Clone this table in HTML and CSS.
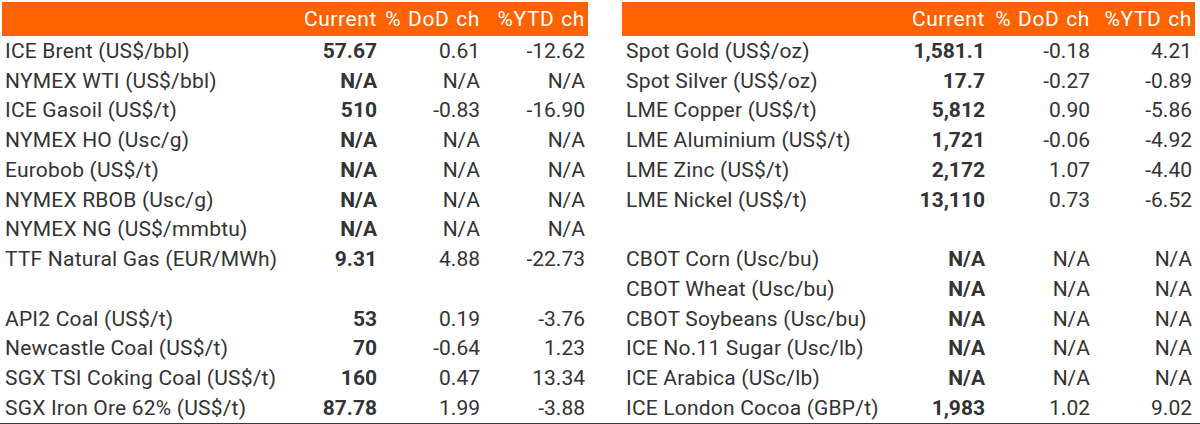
FILE: index.html
```html
<!DOCTYPE html>
<html>
<head>
<meta charset="utf-8">
<link rel="stylesheet" href="styles.css">
</head>
<body>
<div class="wrap">
  <table class="tbl tbl-left">
    <colgroup><col class="c-label-l"><col class="c-cur"><col class="c-dod"><col class="c-ytd"></colgroup>
    <thead><tr><th class="label"></th><th>Current</th><th>% DoD ch</th><th>%YTD ch</th></tr></thead>
    <tbody>
      <tr><td class="label">ICE Brent (US$/bbl)</td><td class="cur">57.67</td><td>0.61</td><td>-12.62</td></tr>
      <tr><td class="label">NYMEX WTI (US$/bbl)</td><td class="cur">N/A</td><td>N/A</td><td>N/A</td></tr>
      <tr><td class="label">ICE Gasoil (US$/t)</td><td class="cur">510</td><td>-0.83</td><td>-16.90</td></tr>
      <tr><td class="label">NYMEX HO (Usc/g)</td><td class="cur">N/A</td><td>N/A</td><td>N/A</td></tr>
      <tr><td class="label">Eurobob (US$/t)</td><td class="cur">N/A</td><td>N/A</td><td>N/A</td></tr>
      <tr><td class="label">NYMEX RBOB (Usc/g)</td><td class="cur">N/A</td><td>N/A</td><td>N/A</td></tr>
      <tr><td class="label">NYMEX NG (US$/mmbtu)</td><td class="cur">N/A</td><td>N/A</td><td>N/A</td></tr>
      <tr><td class="label">TTF Natural Gas (EUR/MWh)</td><td class="cur">9.31</td><td>4.88</td><td>-22.73</td></tr>
      <tr><td class="label"></td><td class="cur"></td><td></td><td></td></tr>
      <tr><td class="label">API2 Coal (US$/t)</td><td class="cur">53</td><td>0.19</td><td>-3.76</td></tr>
      <tr><td class="label">Newcastle Coal (US$/t)</td><td class="cur">70</td><td>-0.64</td><td>1.23</td></tr>
      <tr><td class="label">SGX TSI Coking Coal (US$/t)</td><td class="cur">160</td><td>0.47</td><td>13.34</td></tr>
      <tr><td class="label">SGX Iron Ore 62% (US$/t)</td><td class="cur">87.78</td><td>1.99</td><td>-3.88</td></tr>
    </tbody>
  </table>
  <table class="tbl tbl-right">
    <colgroup><col class="c-label-r"><col class="c-cur"><col class="c-dod-r"><col class="c-ytd-r"></colgroup>
    <thead><tr><th class="label"></th><th>Current</th><th>% DoD ch</th><th>%YTD ch</th></tr></thead>
    <tbody>
      <tr><td class="label">Spot Gold (US$/oz)</td><td class="cur">1,581.1</td><td>-0.18</td><td>4.21</td></tr>
      <tr><td class="label">Spot Silver (US$/oz)</td><td class="cur">17.7</td><td>-0.27</td><td>-0.89</td></tr>
      <tr><td class="label">LME Copper (US$/t)</td><td class="cur">5,812</td><td>0.90</td><td>-5.86</td></tr>
      <tr><td class="label">LME Aluminium (US$/t)</td><td class="cur">1,721</td><td>-0.06</td><td>-4.92</td></tr>
      <tr><td class="label">LME Zinc (US$/t)</td><td class="cur">2,172</td><td>1.07</td><td>-4.40</td></tr>
      <tr><td class="label">LME Nickel (US$/t)</td><td class="cur">13,110</td><td>0.73</td><td>-6.52</td></tr>
      <tr><td class="label"></td><td class="cur"></td><td></td><td></td></tr>
      <tr><td class="label">CBOT Corn (Usc/bu)</td><td class="cur">N/A</td><td>N/A</td><td>N/A</td></tr>
      <tr><td class="label">CBOT Wheat (Usc/bu)</td><td class="cur">N/A</td><td>N/A</td><td>N/A</td></tr>
      <tr><td class="label">CBOT Soybeans (Usc/bu)</td><td class="cur">N/A</td><td>N/A</td><td>N/A</td></tr>
      <tr><td class="label">ICE No.11 Sugar (Usc/lb)</td><td class="cur">N/A</td><td>N/A</td><td>N/A</td></tr>
      <tr><td class="label">ICE Arabica (USc/lb)</td><td class="cur">N/A</td><td>N/A</td><td>N/A</td></tr>
      <tr><td class="label">ICE London Cocoa (GBP/t)</td><td class="cur">1,983</td><td>1.02</td><td>9.02</td></tr>
    </tbody>
  </table>
</div>
</body>
</html>
```

FILE: styles.css
```css
html, body {
  margin: 0;
  padding: 0;
  background: #ffffff;
}
body {
  font-family: Roboto, "Open Sans", sans-serif;
  color: #333333;
  width: 1200px;
}
.wrap {
  display: flex;
  align-items: flex-start;
  gap: 34px;
  padding: 2px 0 0 2px;
  height: 421px;
  box-sizing: content-box;
  border-bottom: 1px solid #3a3a3a;
}
.tbl {
  border-collapse: collapse;
  table-layout: fixed;
  font-size: 21px;
}
.tbl-left { width: 586px; }
.tbl-right { width: 573px; }
.c-label-l { width: 288px; }
.c-label-r { width: 276px; }
.c-cur { width: 90px; }
.c-dod { width: 103px; }
.c-ytd { width: 105px; }
.c-dod-r { width: 105px; }
.c-ytd-r { width: 102px; }
.tbl th {
  background: #ff6200;
  color: #ffffff;
  font-weight: normal;
  height: 34px;
  padding: 0 3px 0 0;
  text-align: right;
  white-space: nowrap;
  vertical-align: middle;
  letter-spacing: 0.6px;
  word-spacing: 1px;
}
.tbl td {
  height: 29.75px;
  padding: 0 3px 0 0;
  text-align: right;
  white-space: nowrap;
  vertical-align: middle;
}
.tbl td.label {
  text-align: left;
  padding: 0 0 0 3px;
  letter-spacing: 0.2px;
}
.tbl-right td.label { padding-left: 4px; }
.tbl td.cur { font-weight: bold; }
```
